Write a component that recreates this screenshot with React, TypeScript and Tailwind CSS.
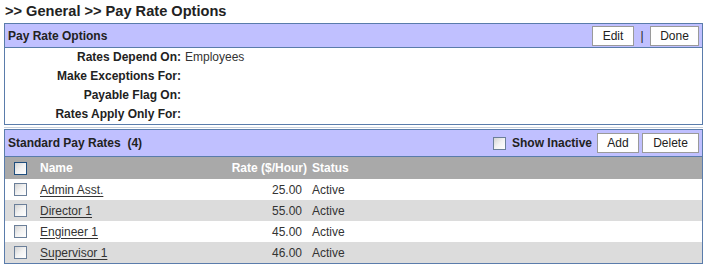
import type { ReactNode } from 'react';

interface RateRow {
  name: string;
  rate: string;
  status: string;
}

const rows: RateRow[] = [
  { name: 'Admin Asst.', rate: '25.00', status: 'Active' },
  { name: 'Director 1', rate: '55.00', status: 'Active' },
  { name: 'Engineer 1', rate: '45.00', status: 'Active' },
  { name: 'Supervisor 1', rate: '46.00', status: 'Active' },
];

const options: [string, string][] = [
  ['Rates Depend On:', 'Employees'],
  ['Make Exceptions For:', ''],
  ['Payable Flag On:', ''],
  ['Rates Apply Only For:', ''],
];

function Box({ dark = false }: { dark?: boolean }) {
  return (
    <span
      className={`block h-[13px] w-[13px] border bg-gradient-to-br from-[#d4d4d4] via-[#f2f2f2] to-white ${dark ? 'border-[#1f4e7e]' : 'border-[#6b7f99]'}`}
    />
  );
}

function Btn({ children, w }: { children: ReactNode; w: string }) {
  return (
    <button
      className={`${w} h-[20px] border border-[#9a9a9a] bg-white text-[12px] leading-none text-[#222]`}
    >
      {children}
    </button>
  );
}

export default function App() {
  return (
    <div className="h-[269px] w-[707px] bg-white font-['Liberation_Sans',Arial,sans-serif] text-[12px] text-[#333]">
      <h1 className="h-[23px] pl-[5px] pt-[2px] text-[14.6px] leading-[18px] font-bold text-[#222]">
        &gt;&gt; General &gt;&gt; Pay Rate Options
      </h1>

      <section className="mx-[4px] border border-[#5a7cab]">
        <header className="flex h-[24px] items-center justify-between border-b border-[#5a7cab] bg-[#c0c0ff] pr-[3px] pl-[3px]">
          <p className="font-bold text-[#222]">Pay Rate Options</p>
          <div className="flex items-center">
            <Btn w="w-[42px]">Edit</Btn>
            <span className="w-[16px] text-center text-[#222]">|</span>
            <Btn w="w-[49px]">Done</Btn>
          </div>
        </header>
        <div className="grid grid-cols-[176px_1fr]">
          {options.map(([label, value]) => (
            <div key={label} className="contents">
              <span className="h-[19px] text-right leading-[19px] font-bold text-[#222]">{label}</span>
              <span className="pl-[4px] leading-[19px]">{value}</span>
            </div>
          ))}
        </div>
      </section>

      <div className="mx-[4px] mt-[2px] h-px bg-[#c8d0dc]" />

      <section className="mx-[4px] mt-px border border-[#5a7cab]">
        <header className="flex h-[27px] items-center justify-between border-b border-[#5a7cab] bg-[#c0c0ff] pr-[3px] pl-[3px]">
          <p className="font-bold text-[#222]">Standard Pay Rates&nbsp;&nbsp;(4)</p>
          <div className="flex items-center">
            <Box />
            <span className="ml-[6px] mr-[5px] font-bold text-[#222]">Show Inactive</span>
            <Btn w="w-[42px]">Add</Btn>
            <span className="w-[3px]" />
            <Btn w="w-[57px]">Delete</Btn>
          </div>
        </header>
        <div className="flex h-[22px] items-center bg-[#a9a9a9] font-bold whitespace-nowrap text-white">
          <span className="w-[35px] shrink-0 pl-[9px]">
            <Box dark />
          </span>
          <span className="w-[180px] shrink-0">Name</span>
          <span className="w-[87px] shrink-0 text-right">Rate ($/Hour)</span>
          <span className="pl-[5px]">Status</span>
        </div>
        {rows.map((row, i) => (
          <div
            key={row.name}
            className={`flex h-[21px] items-center whitespace-nowrap ${i % 2 === 1 ? 'bg-[#dcdcdc]' : 'bg-white'}`}
          >
            <span className="w-[35px] shrink-0 pl-[9px]">
              <Box />
            </span>
            <a className="w-[180px] shrink-0 text-[#333] underline underline-offset-2">{row.name}</a>
            <span className="w-[82px] shrink-0 text-right">{row.rate}</span>
            <span className="pl-[10px]">{row.status}</span>
          </div>
        ))}
      </section>
    </div>
  );
}
